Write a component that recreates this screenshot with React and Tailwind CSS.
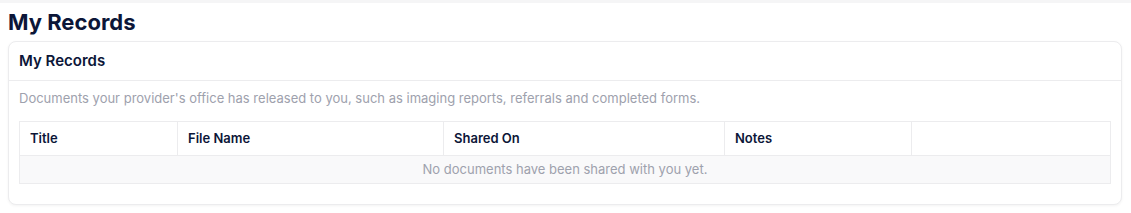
export default function App() {
  const cols = [
    { label: "Title", w: "w-[158px]" },
    { label: "File Name", w: "w-[266px]" },
    { label: "Shared On", w: "w-[281px]" },
    { label: "Notes", w: "w-[187px]" },
    { label: "", w: "" },
  ]

  return (
    <div className="min-h-[213px] bg-white font-['Inter','Liberation_Sans',sans-serif] text-[#0c1638]">
      <div className="h-[3px] bg-[#f5f5f6]"></div>

      <div className="px-[8px]">
        <h1 className="pt-[4px] text-[22px] font-bold leading-[30px]">My Records</h1>

        <div className="mt-[4px] mr-[1px] rounded-lg border border-[#ececee] bg-white shadow-[0_1px_3px_rgba(0,0,0,0.05)]">
          <div className="border-b border-[#ececee] px-[10px] h-[39px] flex items-center">
            <h2 className="text-[15px] font-semibold">My Records</h2>
          </div>

          <div className="px-[10px] pt-[8px] pb-[20px]">
            <p className="text-[13px] leading-[18px] text-[#9ea1ad]">
              Documents your provider's office has released to you, such as imaging reports, referrals and completed forms.
            </p>

            <table className="mt-[14px] w-full border-collapse border border-[#ececee] text-[13px]">
              <thead>
                <tr className="h-[34px]">
                  {cols.map((c, i) => (
                    <th
                      key={i}
                      className={`${c.w} border border-[#ececee] px-[10px] text-left font-semibold`}
                    >
                      {c.label}
                    </th>
                  ))}
                </tr>
              </thead>
              <tbody>
                <tr className="h-[28px] bg-[#f9f9fa]">
                  <td colSpan={5} className="border border-[#ececee] text-center text-[#9ea1ad]">
                    No documents have been shared with you yet.
                  </td>
                </tr>
              </tbody>
            </table>
          </div>
        </div>
      </div>
    </div>
  )
}
